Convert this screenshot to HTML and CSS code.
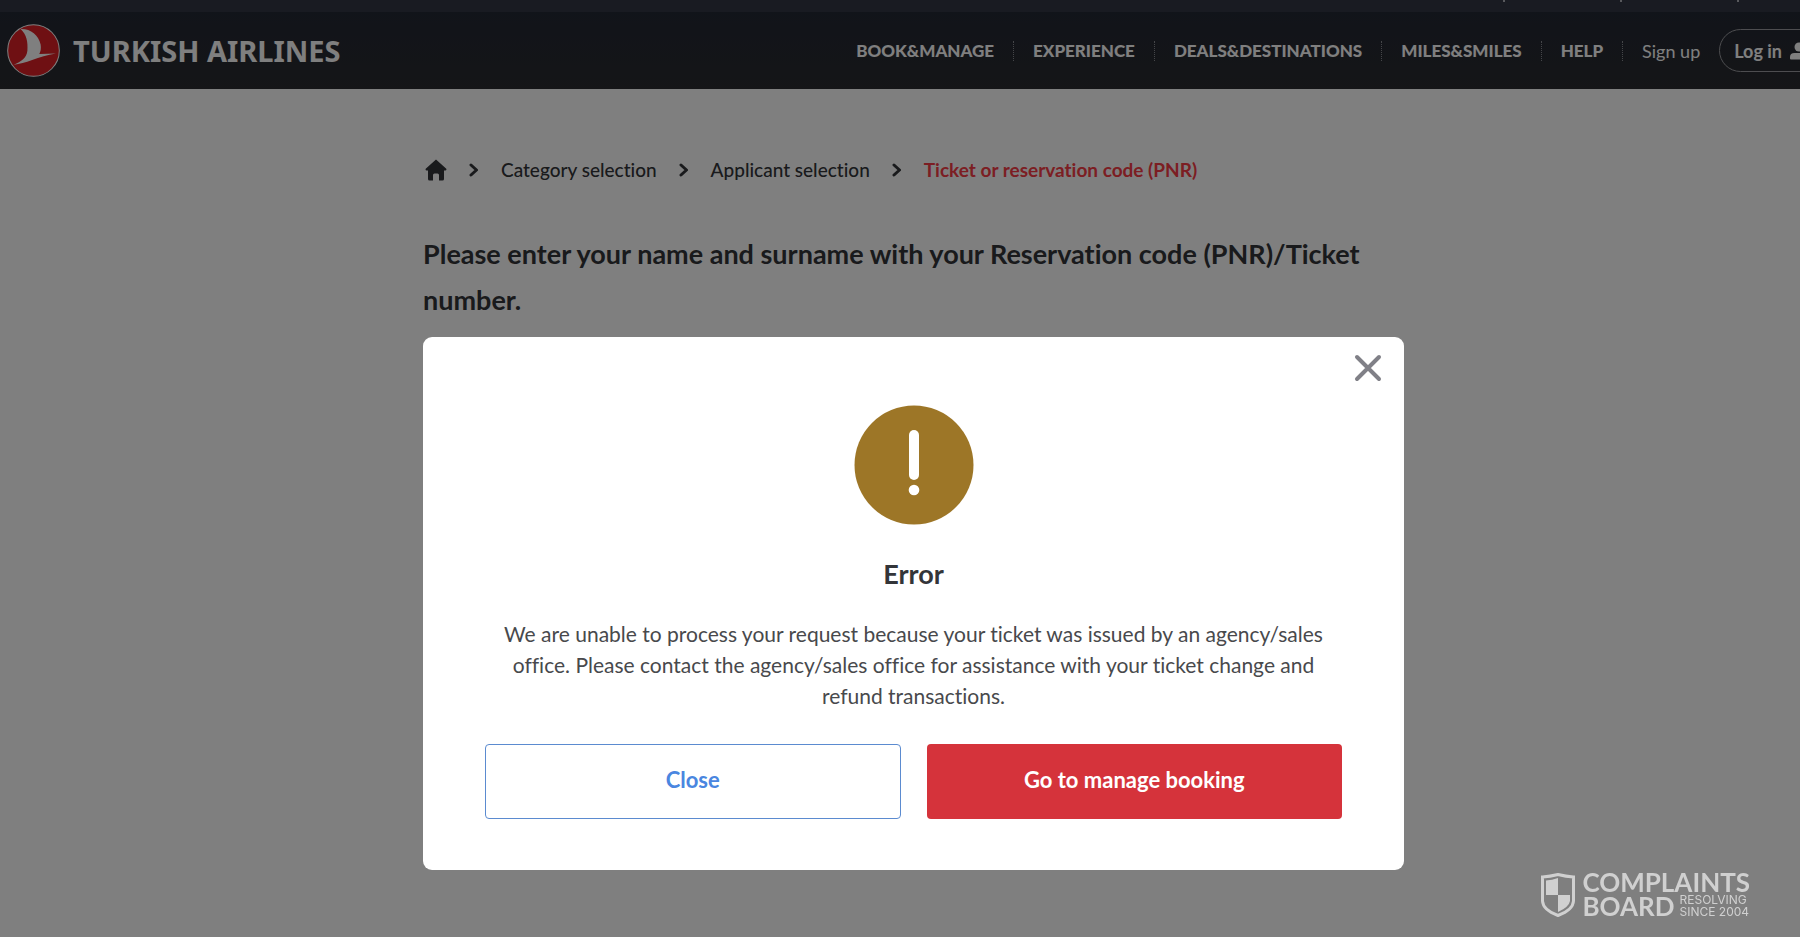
FILE: index.html
```html
<!DOCTYPE html>
<html lang="en">

<head>
    <meta charset="UTF-8">
    <title>Turkish Airlines</title>
    <link rel="stylesheet" href="styles.css">
</head>

<body>
    <div class="page">
        <div class="topbar">
            <span></span>
            <span></span>
            <span></span>
        </div>
        <header class="header">
            <a class="brand" href="/">
                <svg class="brand-logo" viewBox="22 72 156 156" aria-hidden="true">
                    <circle cx="100" cy="150" r="76" fill="#de2026" stroke="#fff" stroke-width="3" />
                    <path d="M62 87C92 86 114 104 121 132C123 144 121 153 117 160L166 159C140 163 119 170 96 178C76 185 59 190 42 192C64 183 80 172 82 151C84 126 80 103 62 87Z" fill="#fff" />
                </svg>
                <span>TURKISH AIRLINES</span>
            </a>
            <nav class="nav">
                <a href="#">BOOK&amp;MANAGE</a>
                <a href="#">EXPERIENCE</a>
                <a href="#">DEALS&amp;DESTINATIONS</a>
                <a href="#">MILES&amp;SMILES</a>
                <a href="#">HELP</a>
                <a class="signup" href="#">Sign up</a>
            </nav>
            <button class="login" type="button">
                Log in
                <svg width="18" height="18" viewBox="0 0 18 18" fill="currentColor" aria-hidden="true">
                    <circle cx="9" cy="5" r="4.5" />
                    <path d="M1 17.5Q0 17.5 0 16.5V15Q0 11 4.500 11H13.500Q18 11 18 15V16.500Q18 17.500 17 17.500Z" />
                </svg>
            </button>
        </header>

        <main class="content">
            <nav class="breadcrumb" aria-label="Breadcrumb">
                <a class="home" href="/" aria-label="Home">
                    <svg width="22" height="22" viewBox="0 0 22 22" fill="currentColor" aria-hidden="true">
                        <path d="M11 0.500L21.300 9.800Q22 11.500 20.500 11.500H19V20Q19 21.500 17.500 21.500H14V16Q14 14.500 12.500 14.500H9.500Q8 14.500 8 16V21.500H4.500Q3 21.500 3 20V11.500H1.500Q0 11.500 0.700 9.800Z" />
                    </svg>
                </a>
                <svg class="chevron" viewBox="0 0 10 14" aria-hidden="true"><path d="M2 2L7.500 7L2 12" /></svg>
                <a href="#">Category selection</a>
                <svg class="chevron" viewBox="0 0 10 14" aria-hidden="true"><path d="M2 2L7.500 7L2 12" /></svg>
                <a href="#">Applicant selection</a>
                <svg class="chevron" viewBox="0 0 10 14" aria-hidden="true"><path d="M2 2L7.500 7L2 12" /></svg>
                <span class="current">Ticket or reservation code (PNR)</span>
            </nav>
            <h1>Please enter your name and surname with your Reservation code (PNR)/Ticket number.</h1>
        </main>

        <div class="overlay">
            <div class="modal" role="dialog" aria-modal="true" aria-labelledby="modal-title">
                <button class="modal-x" type="button" aria-label="Close dialog">
                    <svg width="28" height="28" viewBox="0 0 28 28" aria-hidden="true"><path d="M3 3L25 25M25 3L3 25" /></svg>
                </button>
                <svg class="modal-icon" viewBox="0 0 120 120" aria-hidden="true">
                    <circle cx="60" cy="60" r="59.500" fill="#9d7627" />
                    <rect x="55" y="25" width="10" height="50" rx="5" fill="#fff" />
                    <circle cx="60" cy="85" r="5.300" fill="#fff" />
                </svg>
                <h2 id="modal-title">Error</h2>
                <p>We are unable to process your request because your ticket was issued by an agency/sales office. Please contact the agency/sales office for assistance with your ticket change and refund transactions.</p>
                <div class="modal-actions">
                    <button class="btn btn-outline" type="button">Close</button>
                    <button class="btn btn-primary" type="button">Go to manage booking</button>
                </div>
            </div>
        </div>
    </div>

    <div class="watermark">
        <svg width="34" height="44" viewBox="0 0 34 44" aria-hidden="true">
            <path d="M1.500 4Q9 3.500 17 1.500Q25 3.500 32.500 4V28Q32 37 17 42.500Q2 37 1.500 28Z" fill="none" stroke="currentColor" stroke-width="3" />
            <path d="M17 5V22H5V7.500Q11 7 17 5ZM17 22H29V28Q28 34 17 39Z" fill="currentColor" />
        </svg>
        <div class="watermark-text">
            <div class="watermark-name">COMPLAINTS</div>
            <div class="watermark-row">
                <div class="watermark-name">BOARD</div>
                <div class="watermark-note">RESOLVING<br>SINCE 2004</div>
            </div>
        </div>
    </div>
</body>

</html>
```

FILE: styles.css
```css
* {
    box-sizing: border-box;
}

html,
body {
    height: 100%;
    margin: 0;
    overflow: hidden;
}

body {
    font-family: Lato, "Open Sans", sans-serif;
    font-variant-ligatures: none;
    color: #333539;
    background-color: #fff;
}

a {
    color: inherit;
    text-decoration: none;
}

button {
    font-family: inherit;
    cursor: pointer;
}

/* a little wider than the window, the right edge is cut off */
.page {
    position: relative;
    width: calc(100% + 27px);
    min-height: 100%;
}

.topbar {
    display: flex;
    justify-content: flex-end;
    gap: 115px;
    height: 12px;
    padding-right: 88px;
    background-color: #323644;
}

.topbar span {
    width: 2px;
    height: 2px;
    background-color: #b0b2ba;
}

.header {
    display: flex;
    align-items: center;
    height: 77px;
    padding: 0 4px 0 7px;
    color: #fff;
    background: linear-gradient(#232834, #2a2b2f);
}

.brand {
    display: flex;
    align-items: center;
    gap: 13px;
    margin-right: auto;
    font: bold 29px/36px "Noto Sans", sans-serif;
}

.brand-logo {
    width: 53px;
    height: 53px;
}

.nav {
    display: flex;
    align-items: center;
    font-size: 17px;
    font-weight: 900;
    line-height: 20px;
}

.nav a {
    padding: 0 19px;
}

.nav a + a {
    border-left: 1px dotted #8a8c92;
}

.nav .signup {
    font-size: 18px;
    font-weight: 400;
}

.login {
    display: flex;
    align-items: center;
    gap: 8px;
    height: 43px;
    padding: 0 14px;
    border: 1px solid #9a9ba0;
    border-radius: 22px;
    background: none;
    color: #fff;
    font-size: 18px;
    font-weight: 700;
}

.content {
    width: 981px;
    max-width: 100%;
    margin: 0 auto;
    padding-top: 68px;
}

.breadcrumb {
    display: flex;
    align-items: center;
    gap: 22px;
    font-size: 19px;
    line-height: 26px;
    font-weight: 500;
}

.home {
    display: flex;
    padding-left: 2px;
}

.chevron {
    width: 10px;
    height: 14px;
    fill: none;
    stroke: #333539;
    stroke-width: 3;
    stroke-linecap: round;
    stroke-linejoin: round;
}

.current {
    color: #f83c46;
    font-weight: 700;
}

h1 {
    margin: 48px 0 0;
    font-size: 27px;
    line-height: 46px;
}

.overlay {
    position: absolute;
    inset: 0;
    display: flex;
    justify-content: center;
    align-items: flex-start;
    padding-top: 337px;
    background-color: rgba(0, 0, 0, 0.5);
}

.modal {
    position: relative;
    display: flex;
    flex-direction: column;
    align-items: center;
    width: 981px;
    max-width: 100%;
    padding: 68px 62px 51px;
    border-radius: 9px;
    background-color: #fff;
    text-align: center;
}

.modal-x {
    position: absolute;
    top: 17px;
    right: 22px;
    display: flex;
    padding: 0;
    border: none;
    background: none;
}

.modal-x path {
    stroke: #808087;
    stroke-width: 4;
    stroke-linecap: round;
}

.modal-icon {
    width: 120px;
    height: 120px;
}

.modal h2 {
    margin: 31px 0 26px;
    font-size: 27px;
    line-height: 36px;
}

.modal p {
    margin: 0 0 33px;
    color: #48494c;
    font-size: 21px;
    line-height: 31px;
}

.modal-actions {
    display: flex;
    gap: 26px;
    width: 100%;
}

.btn {
    flex: 1;
    height: 75px;
    padding: 0 0 4px;
    border: 1px solid transparent;
    border-radius: 4px;
    font-size: 22px;
    font-weight: 700;
}

.btn-outline {
    border-color: #5b8bd0;
    background-color: #fff;
    color: #4a86e0;
}

.btn-primary {
    background-color: #d5333b;
    color: #fff;
}

.watermark {
    position: fixed;
    right: 50px;
    bottom: 19px;
    display: flex;
    align-items: center;
    gap: 7px;
    color: #d0d0d0;
}

.watermark-name {
    font-size: 26px;
    font-weight: 700;
    line-height: 23px;
}

.watermark-row {
    display: flex;
    align-items: center;
    gap: 5px;
}

.watermark-note {
    font: 12px/12px Inter, sans-serif;
}
```
